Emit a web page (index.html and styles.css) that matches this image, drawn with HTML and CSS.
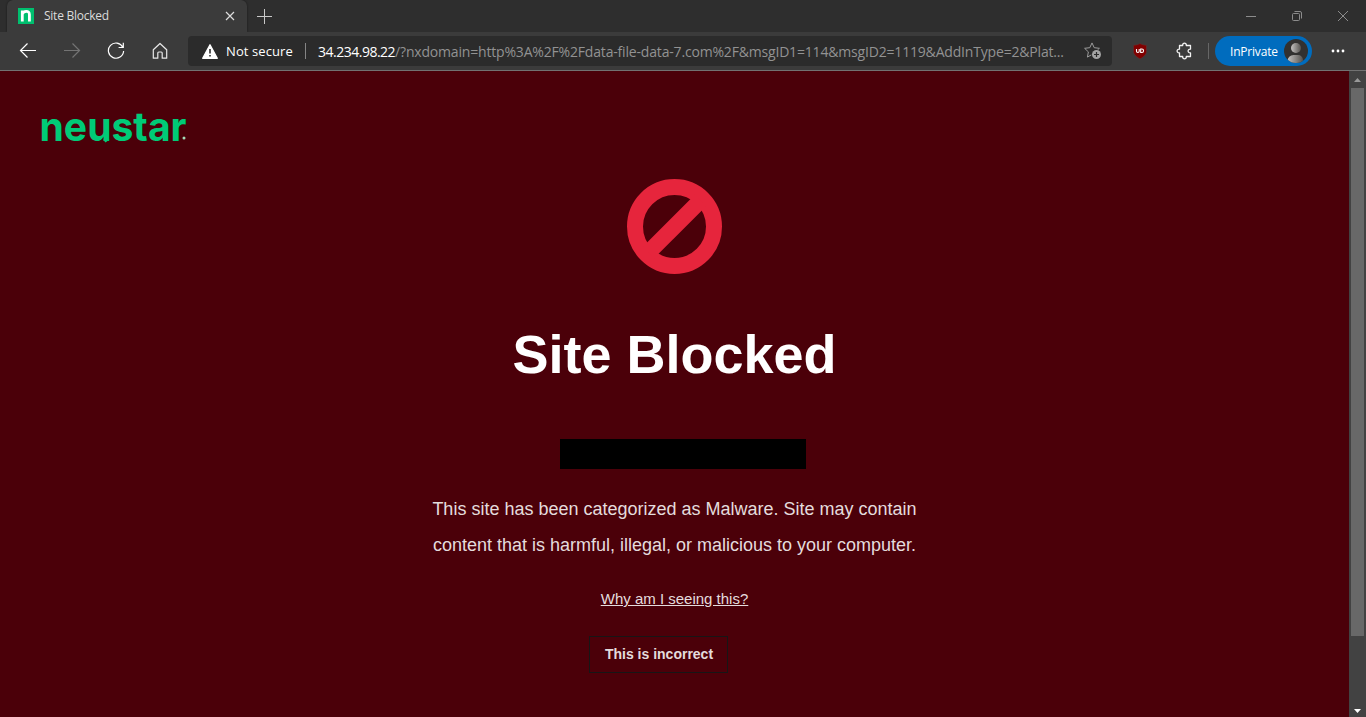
FILE: index.html
```html
<!DOCTYPE html>
<html lang="en">
<head>
  <meta charset="UTF-8">
  <title>Site Blocked</title>
  <link rel="stylesheet" href="styles.css">
</head>
<body>

<div class="tab-strip">
  <div class="tab">
    <svg class="favicon" width="16" height="16" viewBox="0 0 16 16">
      <rect width="16" height="16" fill="#00bf6f"/>
      <path d="M4.3 13.5V2.500M4.3 6C5.5 2.800 11.4 1.800 11.4 6.500v7" fill="none" stroke="#fff" stroke-width="2.8"/>
    </svg>
    <span class="tab-title">Site Blocked</span>
    <svg class="tab-close" width="10" height="10" viewBox="0 0 10 10"><path d="M1 1l8 8M9 1L1 9" stroke="#ddd" stroke-width="1.2"/></svg>
  </div>
  <svg class="new-tab" width="15" height="15" viewBox="0 0 15 15"><path d="M7.5 0v15M0 7.5h15" stroke="#c8c8c8"/></svg>
  <div class="window-buttons">
    <svg width="10" height="10" viewBox="0 0 10 10"><path d="M0 5.5h10" stroke="#8c8c8c"/></svg>
    <svg width="10" height="10" viewBox="0 0 10 10" fill="none" stroke="#8c8c8c"><rect x=".5" y="2.5" width="7" height="7" rx="1"/><path d="M2.5.5H8A1.5 1.5 0 0 1 9.500 2v5.500"/></svg>
    <svg width="10" height="10" viewBox="0 0 10 10"><path d="M0 0l10 10M10 0L0 10" stroke="#8c8c8c"/></svg>
  </div>
</div>

<div class="toolbar">
  <div class="nav-buttons">
    <svg width="18" height="18" viewBox="0 0 18 18" fill="none" stroke="#fff" stroke-width="1.2"><path d="M17 8.500H1.500M8.500 1.500l-7 7 7 7"/></svg>
    <svg width="18" height="18" viewBox="0 0 18 18" fill="none" stroke="#747474" stroke-width="1.2"><path d="M1 8.500h15.500M9.500 1.500l7 7-7 7"/></svg>
    <svg width="18" height="18" viewBox="0 0 18 18" fill="none" stroke="#fff" stroke-width="1.2"><path d="M15.800 5.200A7.600 7.600 0 1 0 16.600 9M16.300 .8v4.700h-4.700"/></svg>
    <svg width="18" height="18" viewBox="0 0 18 18" fill="none" stroke="#e8e8e8" stroke-width="1.2" stroke-linejoin="round"><path d="M2.300 7.800L9 1.500l6.700 6.300v8.400H11.200V11a1 1 0 0 0-1-1H7.800a1 1 0 0 0-1 1v5.200H2.300z"/></svg>
  </div>
  <div class="address-bar">
    <svg width="16" height="15" viewBox="0 0 16 15"><path d="M8 .8L15.300 14.300H.7z" fill="#fff" stroke="#fff" stroke-width="1.300" stroke-linejoin="round"/><path d="M8 5v4.600M8 11v1.600" stroke="#2b2b2b" stroke-width="1.600"/></svg>
    <span class="security">Not secure</span>
    <span class="divider"></span>
    <span class="url"><b>34.234.98.22</b>/?nxdomain=http%3A%2F%2Fdata-file-data-7.com%2F&amp;msgID1=114&amp;msgID2=1119&amp;AddInType=2&amp;Plat...</span>
    <svg class="star" width="18" height="18" viewBox="0 0 18 18"><path d="M8 .9l2.200 4.800 5.200.6-3.900 3.600 1 5.200L8 12.500l-4.600 2.600 1-5.200L.6 6.300l5.200-.6z" fill="none" stroke="#9c9c9c" stroke-linejoin="round"/><circle cx="12.500" cy="12.500" r="5.200" fill="#2b2b2b"/><circle cx="12.500" cy="12.500" r="4.500" fill="#a3a3a3"/><path d="M12.500 10v5M10 12.500h5" stroke="#2b2b2b" stroke-width="1.200"/></svg>
  </div>
  <svg class="shield" width="16" height="17" viewBox="0 0 16 17"><path d="M8 .5c2 1.200 4 1.600 6.500 1.800v6c0 4-3.500 5.700-6.500 7.700-3-2-6.500-3.700-6.500-7.700v-6C4 2.100 6 1.700 8 .5z" fill="#800000" stroke="#5b3535" stroke-width=".6"/><path d="M4.500 6v2.300c0 1.500 2.700 1.500 2.700 0V6M8.700 6v3.500h1.200c2.200 0 2.200-3.500 0-3.500z" fill="none" stroke="#fff" stroke-width="1.100"/></svg>
  <svg class="puzzle" width="17" height="18" viewBox="0 0 17 18"><path d="M3.500 3.500H6.700C6.200 .3 10.800 .3 10.300 3.500H14.500V7.200C11.300 6.700 11.300 11.300 14.500 10.800V14.500H10.300C10.800 17.700 6.200 17.700 6.700 14.500H3.500V10.800C.3 11.300 .3 6.700 3.500 7.200z" fill="none" stroke="#f2f2f2" stroke-width="1.300" stroke-linejoin="round"/></svg>
  <span class="divider dim"></span>
  <div class="profile">
    <span>InPrivate</span>
    <svg width="24" height="24" viewBox="0 0 24 24">
      <defs>
        <clipPath id="face"><circle cx="12" cy="12" r="12"/></clipPath>
        <linearGradient id="shade"><stop offset="0" stop-color="#c4c2c0"/><stop offset="1" stop-color="#55524f"/></linearGradient>
      </defs>
      <g clip-path="url(#face)"><rect width="24" height="24" fill="#323130"/><circle cx="12" cy="9" r="5" fill="url(#shade)"/><path d="M3.500 24v-2a6 6 0 0 1 6-6h4.500a5 5 0 0 1 5 5v3z" fill="url(#shade)"/></g>
    </svg>
  </div>
  <svg class="more" width="14" height="4" viewBox="0 0 14 4" fill="#fff"><circle cx="2" cy="2" r="1.400"/><circle cx="7" cy="2" r="1.400"/><circle cx="12" cy="2" r="1.400"/></svg>
</div>

<div class="viewport">
  <main class="page">
    <svg class="logo" width="170" height="60" viewBox="0 0 170 60">
      <text class="logo-text" x="9.500" y="40.500" textLength="147" lengthAdjust="spacingAndGlyphs">neustar</text>
      <path d="M73 39.500h6.500l-4 3z" fill="#00cb77"/>
      <circle cx="154" cy="38" r="1.500" fill="#a5dcb9"/>
    </svg>
    <svg class="blocked-icon" width="95" height="95" viewBox="0 0 95 95" fill="none" stroke="#e6253c" stroke-width="16"><circle cx="47.500" cy="47.500" r="39.500"/><path d="M21.500 73.500l52-52"/></svg>
    <h1>Site Blocked</h1>
    <div class="redacted"></div>
    <p>This site has been categorized as Malware. Site may contain<br>content that is harmful, illegal, or malicious to your computer.</p>
    <a class="why" href="#">Why am I seeing this?</a>
    <button class="incorrect">This is incorrect</button>
  </main>
  <div class="scrollbar">
    <svg width="17" height="17" viewBox="0 0 17 17"><path d="M5 11l3.500-4 3.500 4z" fill="#999"/></svg>
    <div class="thumb"></div>
    <svg width="17" height="17" viewBox="0 0 17 17"><path d="M5 9h7l-3.500 4z" fill="#fff"/></svg>
  </div>
</div>

</body>
</html>
```
FILE: styles.css
```css
* {
  box-sizing: border-box;
}

body {
  margin: 0;
  height: 717px;
  display: flex;
  flex-direction: column;
  overflow: hidden;
  background-color: #4b0009;
  font-family: "Open Sans", sans-serif;
  color: #fff;
}

svg {
  display: block;
  flex: none;
}

.tab-strip {
  height: 32px;
  flex: none;
  display: flex;
  align-items: center;
  background-color: #2e2e2e;
  padding-left: 7px;
}

.tab {
  width: 240px;
  height: 32px;
  display: flex;
  align-items: center;
  background-color: #3b3b3b;
  border-radius: 6px 6px 0 0;
  padding: 0 12px 0 11px;
  box-shadow: 0 0 2px #151515;
}

.tab-title {
  flex: 1;
  margin: -2px 0 0 10px;
  font-size: 12px;
  letter-spacing: -0.25px;
  color: #dcdcdc;
}

.new-tab {
  margin-left: 10px;
}

.window-buttons {
  margin-left: auto;
  margin-right: 18px;
  display: flex;
  gap: 36px;
}

.toolbar {
  height: 39px;
  flex: none;
  display: flex;
  align-items: center;
  background-color: #3b3b3b;
  border-bottom: 1px solid #727272;
  padding-left: 19px;
}

.nav-buttons {
  display: flex;
  gap: 26px;
}

.address-bar {
  width: 924px;
  height: 30px;
  margin-left: 19px;
  display: flex;
  align-items: center;
  background-color: #2b2b2b;
  border-radius: 4px;
  padding: 0 10px 0 14px;
  white-space: nowrap;
}

.security {
  width: 67px;
  margin-left: 8px;
  font-size: 13px;
  letter-spacing: 0.1px;
}

.divider {
  width: 1px;
  height: 16px;
  margin: 0 12px;
  background-color: #858585;
}

.divider.dim {
  margin: 0 6px 0 15px;
  background-color: #666;
}

.url {
  font-size: 14px;
  letter-spacing: -0.18px;
  color: #929292;
}

.url b {
  font-weight: normal;
  letter-spacing: -0.5px;
  color: #fff;
}

.star {
  margin-left: auto;
}

.shield {
  margin-left: 20px;
}

.puzzle {
  margin-left: 28px;
}

.profile {
  width: 97px;
  height: 30px;
  display: flex;
  align-items: center;
  justify-content: space-between;
  background-color: #006cbe;
  border-radius: 15px;
  padding: 0 4px 0 15px;
  font-size: 12px;
  letter-spacing: -0.2px;
}

.more {
  margin-left: 19px;
}

.viewport {
  flex: 1;
  display: flex;
}

.page {
  flex: 1;
  display: flex;
  flex-direction: column;
  align-items: center;
  font-family: "Liberation Sans", Arial, sans-serif;
  color: #e4dcdd;
}

.logo {
  align-self: flex-start;
  margin: 29px 0 0 30px;
}

.logo-text {
  font-family: Inter, sans-serif;
  font-size: 40px;
  font-weight: 700;
  fill: #00cb77;
}

.blocked-icon {
  margin-top: 19px;
}

h1 {
  margin: 49px 0 0;
  font-size: 54px;
  line-height: 62px;
  color: #fff;
}

.redacted {
  width: 246px;
  height: 30px;
  margin: 54px 0 0 17px;
  background-color: #000;
}

p {
  margin: 22px 0 0;
  font-size: 18px;
  line-height: 36px;
  text-align: center;
}

.why {
  margin-top: 27px;
  font-size: 15px;
  line-height: 17px;
  color: inherit;
}

.incorrect {
  width: 139px;
  height: 37px;
  margin: 29px 32px 0 0;
  padding: 0 0 1px 1px;
  background: none;
  border: 1px solid #161616;
  font-family: inherit;
  font-size: 14px;
  font-weight: bold;
  color: inherit;
}

.scrollbar {
  width: 17px;
  display: flex;
  flex-direction: column;
  background-color: #424242;
}

.thumb {
  width: 13px;
  height: 548px;
  margin: 0 2px auto;
  background-color: #686868;
}
```
